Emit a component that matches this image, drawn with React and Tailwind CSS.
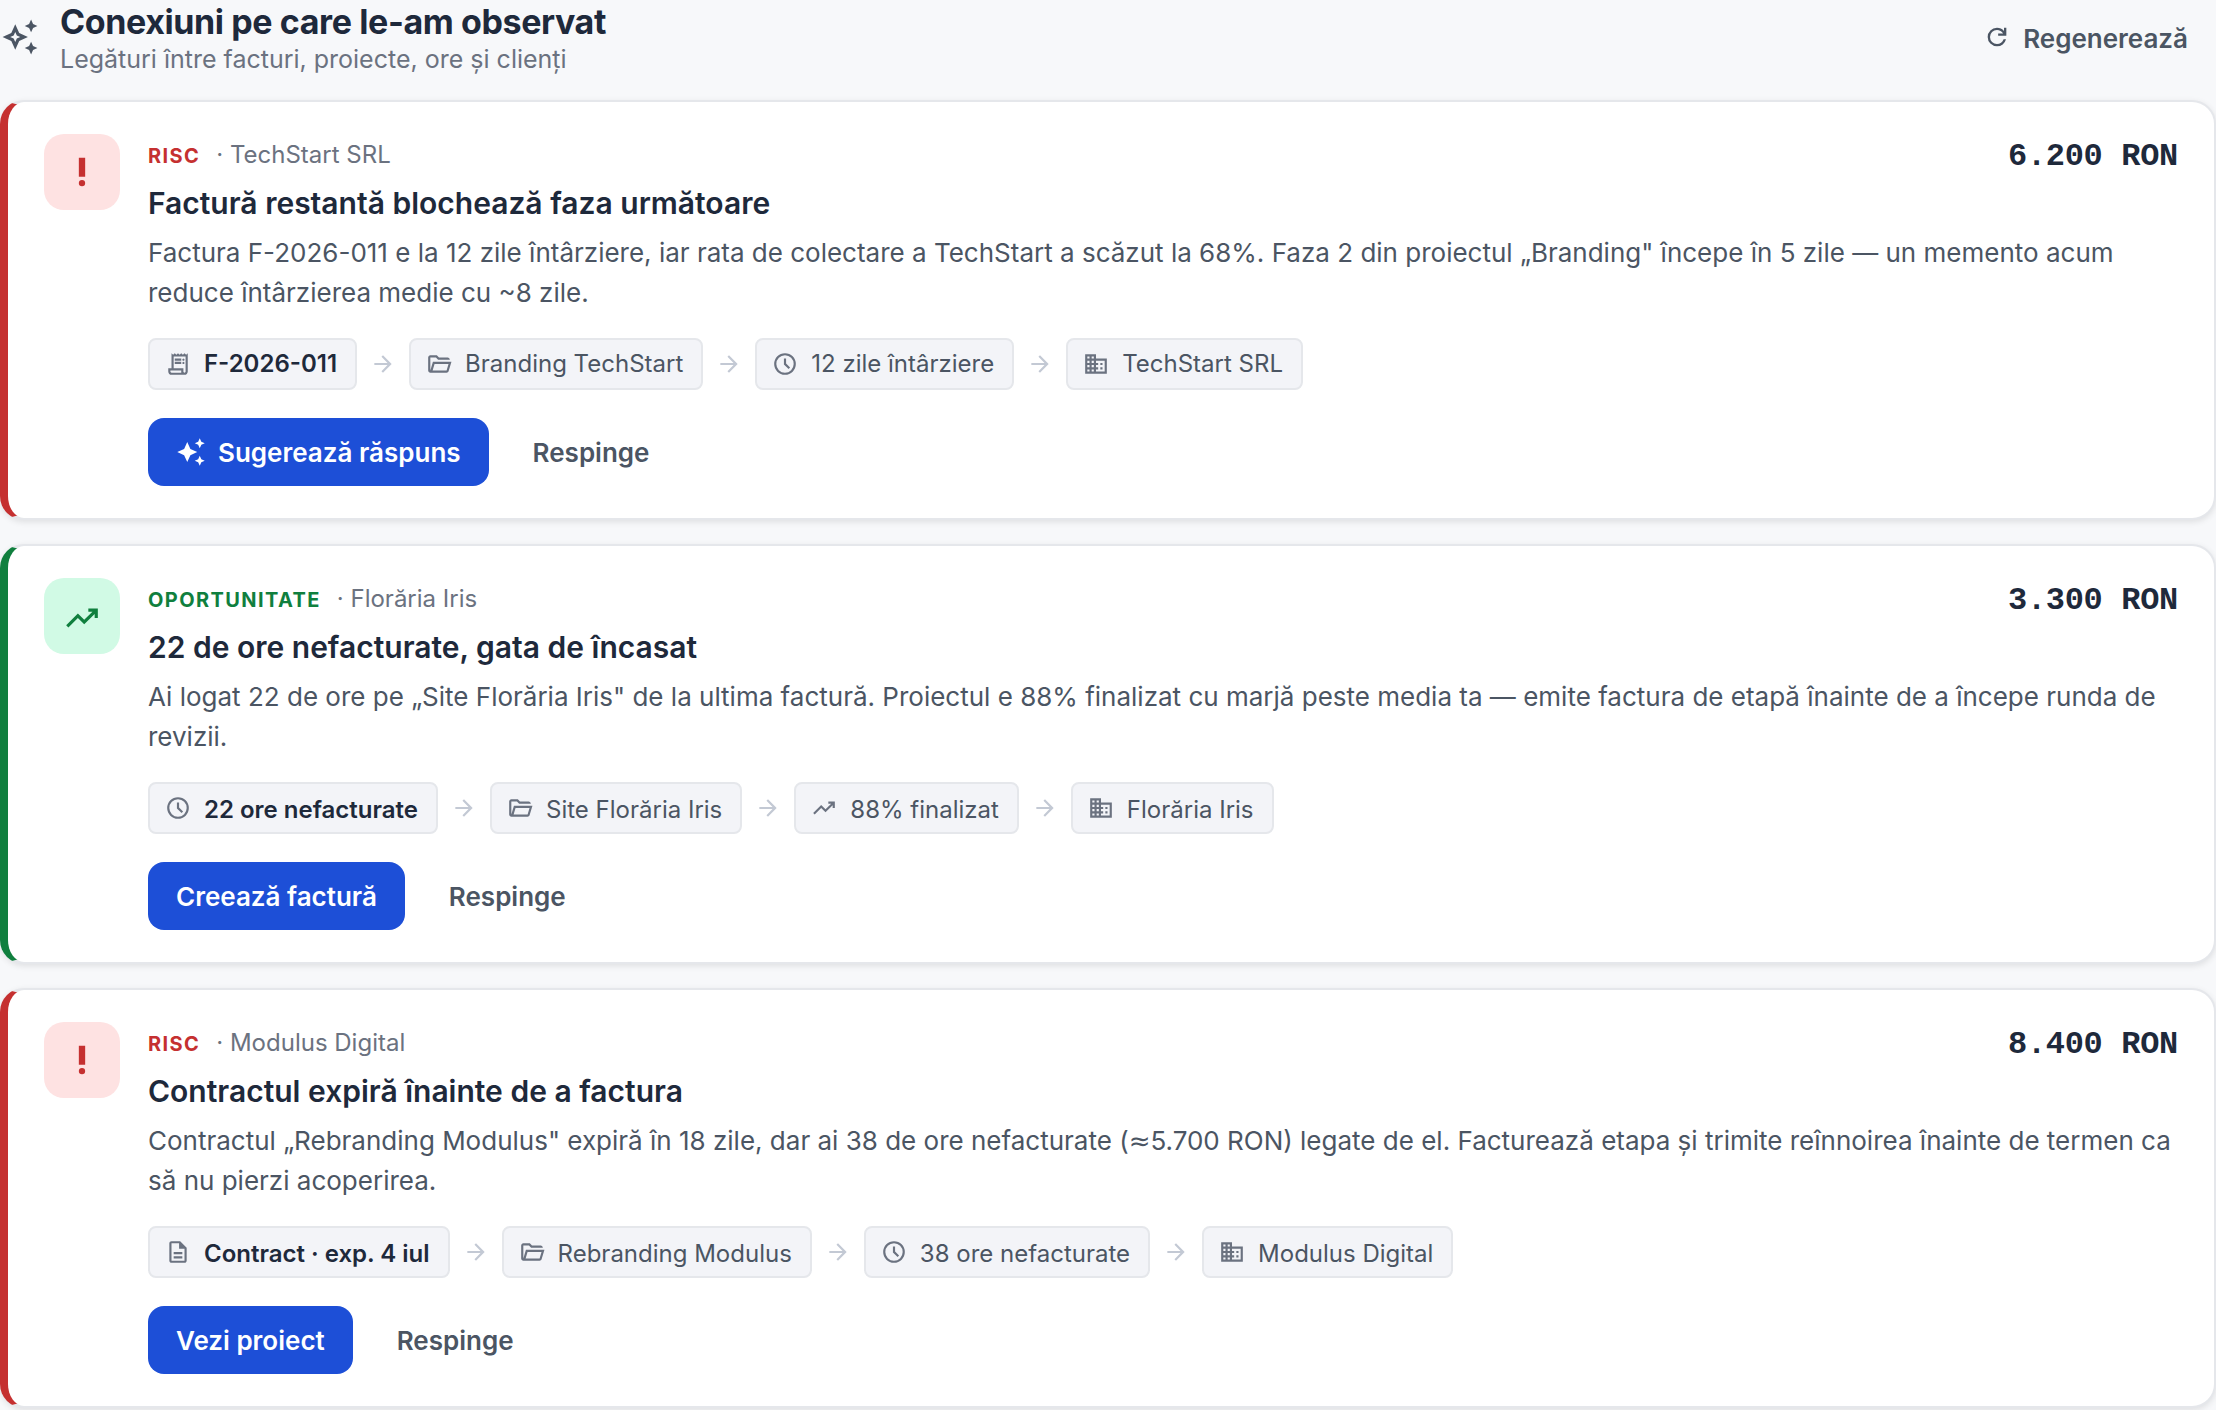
import React from 'react';
import { MdOutlineAutoAwesome, MdAutoAwesome, MdPriorityHigh } from 'react-icons/md';

const Icon = ({ d, className }) => (
  <svg viewBox="0 -960 960 960" fill="currentColor" className={`shrink-0 ${className}`}>
    <path d={d} />
  </svg>
);

const icons = {
  arrow: 'M647-440H160v-80h487L423-744l57-56 320 320-320 320-57-56 224-224Z',
  refresh: 'M480-160q-134 0-227-93t-93-227q0-134 93-227t227-93q69 0 132 28.5T720-690v-110h80v280H520v-80h168q-32-56-87.5-88T480-720q-100 0-170 70t-70 170q0 100 70 170t170 70q77 0 139-44t87-116h84q-28 106-114 173t-196 67Z',
  trend: 'm136-240-56-56 296-298 160 160 208-206H640v-80h240v240h-80v-104L536-320 376-480 136-240Z',
  clock: 'm612-292 56-56-148-148v-184h-80v216l172 172ZM480-80q-83 0-156-31.5T197-197q-54-54-85.5-127T80-480q0-83 31.5-156T197-763q54-54 127-85.5T480-880q83 0 156 31.5T763-763q54 54 85.5 127T880-480q0 83-31.5 156T763-197q-54 54-127 85.5T480-80Zm0-80q133 0 226.5-93.5T800-480q0-133-93.5-226.5T480-800q-133 0-226.5 93.5T160-480q0 133 93.5 226.5T480-160Z',
  folder: 'M160-160q-33 0-56.5-23.5T80-240v-480q0-33 23.5-56.5T160-800h240l80 80h320q33 0 56.5 23.5T880-640H447l-80-80H160v480l96-320h684L837-217q-8 26-29.5 41.5T760-160H160Zm84-80h516l72-240H316l-72 240Z',
  company: 'M80-120v-720h400v160h400v560H80Zm80-80h80v-80h-80v80Zm0-160h80v-80h-80v80Zm0-160h80v-80h-80v80Zm0-160h80v-80h-80v80Zm160 480h80v-80h-80v80Zm0-160h80v-80h-80v80Zm0-160h80v-80h-80v80Zm0-160h80v-80h-80v80Zm160 480h320v-400H480v80h80v80h-80v80h80v80h-80v80Zm160-240v-80h80v80h-80Zm0 160v-80h80v80h-80Z',
  document: 'M320-240h320v-80H320v80Zm0-160h320v-80H320v80ZM240-80q-33 0-56.5-23.5T160-160v-640q0-33 23.5-56.5T240-880h320l240 240v480q0 33-23.5 56.5T720-80H240Zm280-520v-200H240v640h480v-440H520Z',
  receipt: 'M240-80q-50 0-85-35t-35-85v-120h120v-560l60 60 60-60 60 60 60-60 60 60 60-60 60 60 60-60 60 60 60-60v680q0 50-35 85t-85 35H240Zm480-80q17 0 28.5-11.5T760-200v-560H320v440h360v120q0 17 11.5 28.5T720-160ZM360-600v-80h240v80H360Zm0 120v-80h240v80H360Zm320-120q-17 0-28.5-11.5T640-640q0-17 11.5-28.5T680-680q17 0 28.5 11.5T720-640q0 17-11.5 28.5T680-600Zm0 120q-17 0-28.5-11.5T640-520q0-17 11.5-28.5T680-560q17 0 28.5 11.5T720-520q0 17-11.5 28.5T680-480ZM240-160h360v-80H200v40q0 17 11.5 28.5T240-160Z'
};

const tones = {
  risk: {
    label: 'RISC',
    border: 'border-l-[#c53030]',
    text: 'text-[#c53030]',
    box: 'bg-[#fee2e2] text-[#c53030]'
  },
  opportunity: {
    label: 'OPORTUNITATE',
    border: 'border-l-[#107f3e]',
    text: 'text-[#107f3e]',
    box: 'bg-[#d1fae5] text-[#107f3e]'
  }
};

const insights = [
  {
    id: 1,
    tone: 'risk',
    client: 'TechStart SRL',
    amount: '6.200 RON',
    title: 'Factură restantă blochează faza următoare',
    body: 'Factura F-2026-011 e la 12 zile întârziere, iar rata de colectare a TechStart a scăzut la 68%. Faza 2 din proiectul „Branding" începe în 5 zile — un memento acum reduce întârzierea medie cu ~8 zile.',
    chain: [
      { icon: 'receipt', label: 'F-2026-011' },
      { icon: 'folder', label: 'Branding TechStart' },
      { icon: 'clock', label: '12 zile întârziere' },
      { icon: 'company', label: 'TechStart SRL' }
    ],
    action: 'Sugerează răspuns',
    ai: true
  },
  {
    id: 2,
    tone: 'opportunity',
    client: 'Florăria Iris',
    amount: '3.300 RON',
    title: '22 de ore nefacturate, gata de încasat',
    body: 'Ai logat 22 de ore pe „Site Florăria Iris" de la ultima factură. Proiectul e 88% finalizat cu marjă peste media ta — emite factura de etapă înainte de a începe runda de revizii.',
    chain: [
      { icon: 'clock', label: '22 ore nefacturate' },
      { icon: 'folder', label: 'Site Florăria Iris' },
      { icon: 'trend', label: '88% finalizat' },
      { icon: 'company', label: 'Florăria Iris' }
    ],
    action: 'Creează factură'
  },
  {
    id: 3,
    tone: 'risk',
    client: 'Modulus Digital',
    amount: '8.400 RON',
    title: 'Contractul expiră înainte de a factura',
    body: (
      <>
        Contractul „Rebranding Modulus" expiră în 18 zile, dar ai 38 de ore nefacturate (
        <span className="font-['DejaVu_Sans',sans-serif] leading-none">≈</span>
        5.700 RON) legate de el. Facturează etapa și trimite reînnoirea înainte de termen ca să nu pierzi acoperirea.
      </>
    ),
    chain: [
      { icon: 'document', label: 'Contract · exp. 4 iul' },
      { icon: 'folder', label: 'Rebranding Modulus' },
      { icon: 'clock', label: '38 ore nefacturate' },
      { icon: 'company', label: 'Modulus Digital' }
    ],
    action: 'Vezi proiect'
  }
];

const Chip = ({ icon, label, primary, low }) => (
  <span className="flex h-[52px] items-center gap-[13px] rounded-lg border-2 border-[#e5e7eb] bg-[#f3f4f8] pr-[18px] pl-[15px]">
    <Icon d={icons[icon]} className="h-[26px] w-[26px] text-[#6b7280]" />
    <span className={`text-[24px] ${primary ? 'font-semibold text-[#1e293b]' : 'text-[#4b5563]'} ${low ? 'pt-[3px]' : ''}`}>{label}</span>
  </span>
);

const InsightCard = ({ insight }) => {
  const tone = tones[insight.tone];

  return (
    <article className={`flex h-[420px] gap-7 rounded-[24px] border-2 border-l-8 border-[#e5e7eb] bg-white px-9 pt-8 shadow-[0_2px_6px_rgba(0,0,0,0.1)] ${tone.border}`}>
      <div className={`flex h-[76px] w-[76px] shrink-0 items-center justify-center rounded-[20px] ${tone.box}`}>
        {insight.tone === 'risk'
          ? <MdPriorityHigh className="h-[38px] w-[38px]" />
          : <Icon d={icons.trend} className="mt-[3px] h-[38px] w-[38px]" />}
      </div>
      <div className="min-w-0 flex-1">
        <div className="flex h-[42px] items-center justify-between">
          <div className="flex items-baseline gap-4">
            <span className={`text-[20px] font-bold tracking-[0.07em] ${tone.text}`}>{tone.label}</span>
            <span className="text-[24px] text-[#6b7280]">· {insight.client}</span>
          </div>
          <span className="pt-1 font-['Liberation_Mono',monospace] text-[32px] font-bold tracking-[-0.01em] text-[#1e293b]">{insight.amount}</span>
        </div>
        <h3 className="mt-1 text-[30px] leading-[46px] font-semibold text-[#1e293b]">{insight.title}</h3>
        <p className="mt-[7px] text-[26px] leading-[40px] text-[#4b5563]">{insight.body}</p>
        <div className="mt-[25px] flex items-center">
          {insight.chain.map((item, idx) => (
            <React.Fragment key={item.label}>
              {idx > 0 && <Icon d={icons.arrow} className="mr-[13px] ml-[13px] h-[26px] w-[26px] text-[#c3c9d4]" />}
              <Chip icon={item.icon} label={item.label} primary={idx === 0} low={insight.id > 1} />
            </React.Fragment>
          ))}
        </div>
        <div className="mt-7 flex items-center gap-4">
          <button className="flex h-[68px] items-center gap-3 rounded-2xl bg-[#1d4fd7] px-7 text-[26px] font-semibold text-white">
            {insight.ai && <MdAutoAwesome className="h-[30px] w-[30px]" />}
            {insight.action}
          </button>
          <button className="h-[68px] px-7 text-[26px] font-semibold text-[#4b5563]">Respinge</button>
        </div>
      </div>
    </article>
  );
};

const App = () => {
  return (
    <main className="h-[1410px] w-full overflow-hidden bg-[#f7f8fa] font-['Inter',sans-serif]">
      <header className="flex h-[100px] items-start justify-between pr-7">
        <div className="flex items-start gap-[21px]">
          <MdOutlineAutoAwesome className="mt-[18px] ml-px h-[38px] w-[38px] text-[#4b5563]" />
          <div>
            <h2 className="text-[34px] leading-[44px] font-bold tracking-[-0.4px] text-[#1e293b]">Conexiuni pe care le-am observat</h2>
            <p className="text-[25px] leading-[30px] text-[#6b7280]">Legături între facturi, proiecte, ore și clienți</p>
          </div>
        </div>
        <button className="flex h-[76px] items-center gap-3 text-[26px] font-semibold text-[#4b5563]">
          <Icon d={icons.refresh} className="mb-0.5 h-7 w-7" />
          Regenerează
        </button>
      </header>
      <div className="space-y-6">
        {insights.map(insight => (
          <InsightCard key={insight.id} insight={insight} />
        ))}
      </div>
    </main>
  );
};

export default App;
